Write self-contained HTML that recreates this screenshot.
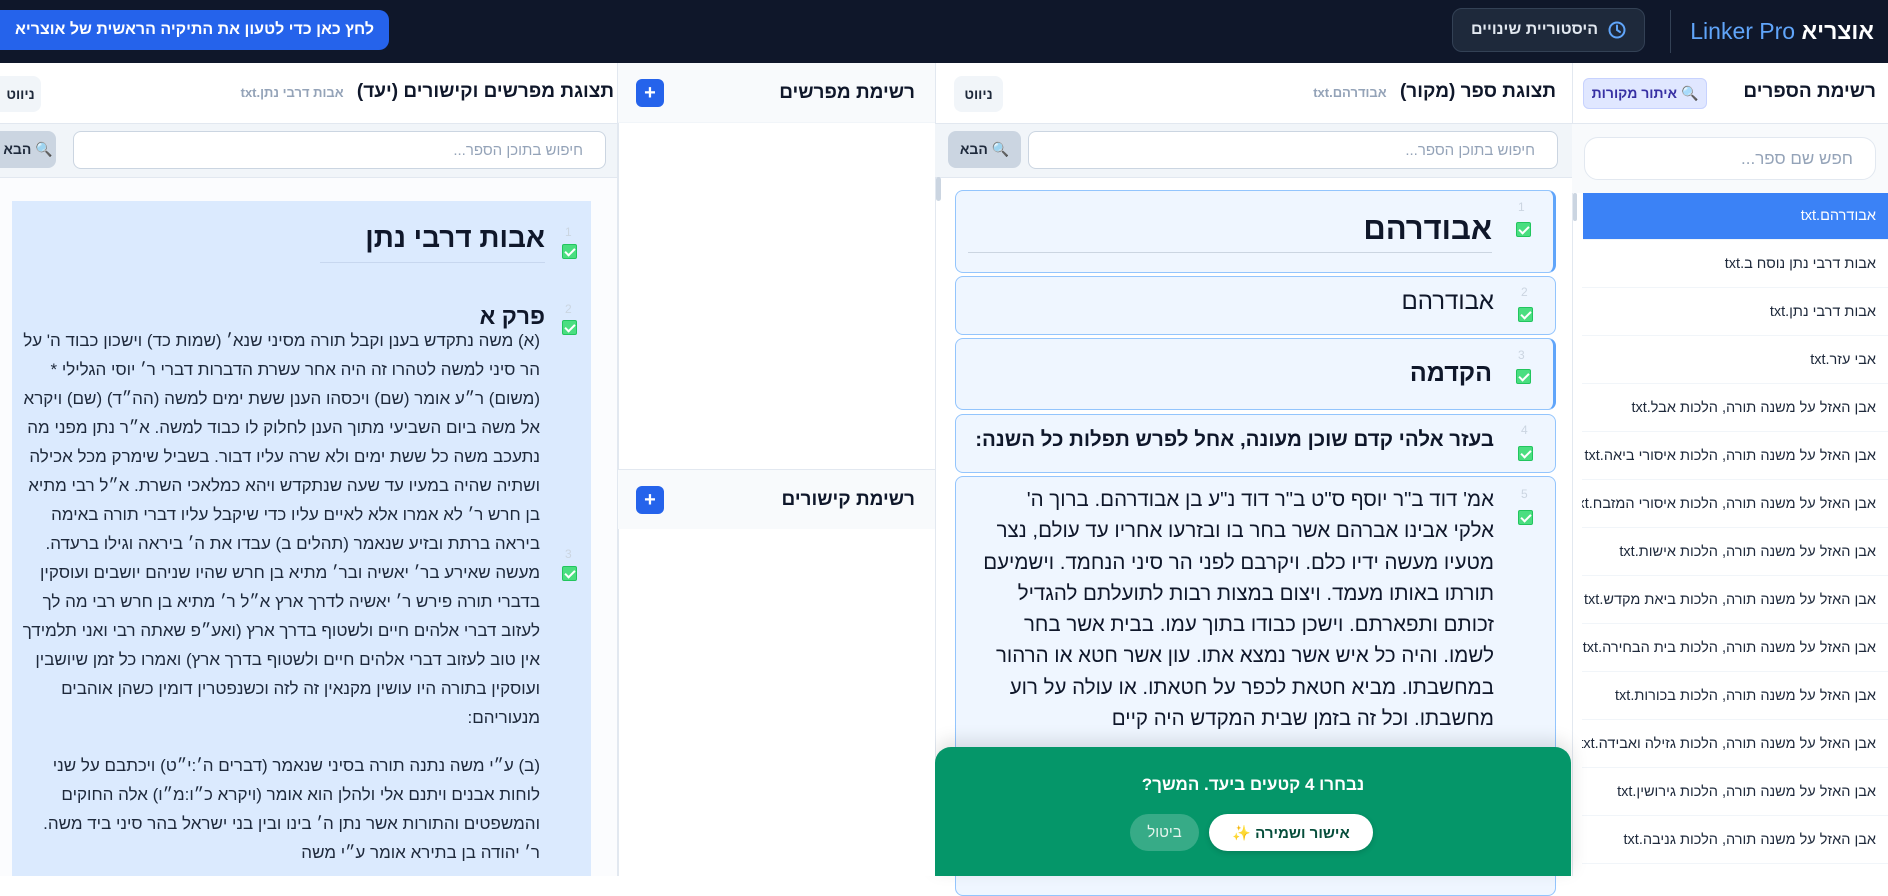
<!DOCTYPE html>
<html lang="he"><head><meta charset="utf-8">
<style>
*{box-sizing:border-box;margin:0;padding:0}
body{width:1888px;height:876px;overflow:hidden;background:#fff;font-family:"Liberation Sans","DejaVu Sans",sans-serif;position:relative;color:#0f172a}
.a{position:absolute}
.r{direction:rtl;white-space:nowrap}
.hdr{left:0;top:0;width:1888px;height:63px;background:#0f172a}
.title{font-weight:bold;font-size:19px;color:#0f172a}
.sub{font-weight:bold;font-size:13px;color:#94a3b8}
.nav{background:#f1f5f9;border-radius:8px;font-size:14px;font-weight:bold;color:#1e293b;display:flex;align-items:center;justify-content:center}
.inp{background:#fff;border:1px solid #cbd5e1;border-radius:8px;font-size:15px;color:#94a3b8;direction:rtl;padding-right:22px;display:flex;align-items:center}
.next{background:#cbd5e1;border-radius:8px;font-size:14px;font-weight:bold;color:#1e293b;display:flex;align-items:center;justify-content:center;gap:4px;direction:rtl}
.chk{width:15px;height:15px;background:#4ade80;border:1px solid #22c55e;border-radius:2px}
.chk:after{content:"";position:absolute;left:4px;top:1px;width:4px;height:8px;border:solid #fff;border-width:0 2px 2px 0;transform:rotate(45deg)}
.num{font-size:12px;color:#cbd5e1}
.card{background:#eff6ff;border:1px solid #93c5fd;border-radius:8px}
.book{right:0;width:306px;height:48px;border-bottom:1px solid #f1f5f9;font-size:14.5px;color:#1e293b;direction:rtl;padding-right:12px;display:flex;align-items:center;white-space:nowrap;overflow:hidden}
.plus{width:28px;height:28px;background:#2563eb;border-radius:6px;color:#fff;font-weight:bold;font-size:20px;display:flex;align-items:center;justify-content:center}
.tl{font-size:17px;color:#1e293b;line-height:29px;height:29px;text-align:right}
.sl{font-size:20.5px;color:#0f172a;line-height:31.3px;height:31.3px;text-align:right}
</style></head><body>

<!-- header -->
<div class="a hdr"></div>
<div class="a r" style="right:14px;top:16px;font-size:23px;line-height:30px"><b style="color:#fff">אוצריא</b> <span style="color:#60a5fa;font-weight:300">Linker Pro</span></div>
<div class="a" style="left:1670px;top:10px;width:1px;height:43px;background:#334155"></div>
<div class="a r" style="left:1452px;top:8px;width:193px;height:44px;background:#1e293b;border:1px solid #334155;border-radius:10px;display:flex;align-items:center;justify-content:center;gap:10px;font-weight:bold;font-size:16px;color:#e2e8f0">
<svg width="18" height="18" viewBox="0 0 18 18"><circle cx="9" cy="9" r="7.5" fill="none" stroke="#60a5fa" stroke-width="2"/><path d="M9 4.5V9l3 2" fill="none" stroke="#60a5fa" stroke-width="2" stroke-linecap="round"/></svg>היסטוריית שינויים</div>
<div class="a r" style="left:0;top:10px;width:389px;height:40px;background:#2563eb;border-radius:0 10px 10px 0;color:#fff;font-weight:bold;font-size:16px;display:flex;align-items:center;justify-content:center">לחץ כאן כדי לטעון את התיקיה הראשית של אוצריא</div>

<!-- books panel -->
<div class="a" style="left:1572px;top:63px;width:316px;height:813px;background:#fff;border-left:1px solid #e2e8f0"></div>
<div class="a r title" style="right:12px;top:81px">רשימת הספרים</div>
<div class="a r" style="left:1583px;top:78px;width:124px;height:31px;background:#e0e7ff;border:1px solid #c7d2fe;border-radius:6px;font-size:14px;font-weight:bold;color:#3730a3;display:flex;align-items:center;justify-content:center;gap:5px">🔍 איתור מקורות</div>
<div class="a" style="left:1572px;top:123px;width:316px;height:70px;background:#f8fafc;border-top:1px solid #e2e8f0"></div>
<div class="a inp" style="left:1584px;top:137px;width:292px;height:43px;border-radius:14px;border-color:#e2e8f0;font-size:17px">חפש שם ספר...</div>
<div class="a" style="left:1573px;top:193px;width:4px;height:28px;background:#cbd5e1;border-radius:2px"></div>
<div class="a book" style="top:193px;height:47px;background:#3b82f6;color:#fff;width:305px">אבודרהם.txt</div>
<div class="a book" style="top:240px">אבות דרבי נתן נוסח ב.txt</div>
<div class="a book" style="top:288px">אבות דרבי נתן.txt</div>
<div class="a book" style="top:336px">אבי עזר.txt</div>
<div class="a book" style="top:384px">אבן האזל על משנה תורה, הלכות אבל.txt</div>
<div class="a book" style="top:432px">אבן האזל על משנה תורה, הלכות איסורי ביאה.txt</div>
<div class="a book" style="top:480px">אבן האזל על משנה תורה, הלכות איסורי המזבח.txt</div>
<div class="a book" style="top:528px">אבן האזל על משנה תורה, הלכות אישות.txt</div>
<div class="a book" style="top:576px">אבן האזל על משנה תורה, הלכות ביאת מקדש.txt</div>
<div class="a book" style="top:624px">אבן האזל על משנה תורה, הלכות בית הבחירה.txt</div>
<div class="a book" style="top:672px">אבן האזל על משנה תורה, הלכות בכורות.txt</div>
<div class="a book" style="top:720px">אבן האזל על משנה תורה, הלכות גזילה ואבידה.txt</div>
<div class="a book" style="top:768px">אבן האזל על משנה תורה, הלכות גירושין.txt</div>
<div class="a book" style="top:816px">אבן האזל על משנה תורה, הלכות גניבה.txt</div>

<!-- source panel -->
<div class="a" style="left:935px;top:63px;width:637px;height:813px;background:#fff;border-left:1px solid #e2e8f0"></div>
<div class="a r" style="right:332px;top:81px"><span class="title">תצוגת ספר (מקור)</span> &nbsp; <span class="sub">אבודרהם.txt</span></div>
<div class="a nav" style="left:954px;top:76px;width:49px;height:36px">ניווט</div>
<div class="a" style="left:935px;top:123px;width:637px;height:55px;background:#f1f5f9;border-top:1px solid #e2e8f0;border-bottom:1px solid #e2e8f0"></div>
<div class="a inp" style="left:1028px;top:131px;width:530px;height:38px">חיפוש בתוכן הספר...</div>
<div class="a next" style="left:948px;top:131px;width:73px;height:37px">🔍 הבא</div>
<div class="a" style="left:936px;top:177px;width:5px;height:24px;background:#cbd5e1;border-radius:3px"></div>

<div class="a card" style="left:955px;top:190px;width:601px;height:83px;border-right:3px solid #60a5fa"></div>
<div class="a num" style="left:1518px;top:200px">1</div><div class="a chk" style="left:1516px;top:222px"></div>
<div class="a r" style="right:396px;top:211px;font-size:31px;font-weight:bold">אבודרהם</div>
<div class="a" style="left:968px;top:252px;width:524px;height:1px;background:#cbd5e1"></div>

<div class="a card" style="left:955px;top:276px;width:601px;height:59px"></div>
<div class="a num" style="left:1521px;top:285px">2</div><div class="a chk" style="left:1518px;top:307px"></div>
<div class="a r" style="right:394px;top:288px;font-size:24px">אבודרהם</div>

<div class="a card" style="left:955px;top:338px;width:601px;height:72px;border-right:3px solid #60a5fa"></div>
<div class="a num" style="left:1518px;top:348px">3</div><div class="a chk" style="left:1516px;top:369px"></div>
<div class="a r" style="right:396px;top:359px;font-size:25px;font-weight:bold">הקדמה</div>

<div class="a card" style="left:955px;top:414px;width:601px;height:59px"></div>
<div class="a num" style="left:1521px;top:423px">4</div><div class="a chk" style="left:1518px;top:446px"></div>
<div class="a r" style="right:394px;top:428px;font-size:20.5px;font-weight:bold">בעזר אלהי קדם שוכן מעונה, אחל לפרש תפלות כל השנה:</div>

<div class="a card" style="left:955px;top:476px;width:601px;height:420px"></div>
<div class="a num" style="left:1521px;top:487px">5</div><div class="a chk" style="left:1518px;top:510px"></div>
<div class="a r" style="right:394px;top:484px;width:540px">
<div class="sl">אמ' דוד ב"ר יוסף ס"ט ב"ר דוד נ"ע בן אבודרהם. ברוך ה'</div>
<div class="sl">אלקי אבינו אברהם אשר בחר בו ובזרעו אחריו עד עולם, נצר</div>
<div class="sl">מטעיו מעשה ידיו כלם. ויקרבם לפני הר סיני הנחמד. וישמיעם</div>
<div class="sl">תורתו באותו מעמד. ויצום במצות רבות לתועלתם להגדיל</div>
<div class="sl">זכותם ותפארתם. וישכן כבודו בתוך עמו. בבית אשר בחר</div>
<div class="sl">לשמו. והיה כל איש אשר נמצא אתו. עון אשר חטא או הרהור</div>
<div class="sl">במחשבתו. מביא חטאת לכפר על חטאתו. או עולה על רוע</div>
<div class="sl">מחשבתו. וכל זה בזמן שבית המקדש היה קיים</div>
</div>

<!-- toast -->
<div class="a" style="left:935px;top:747px;width:636px;height:129px;background:#059669;border-radius:16px 16px 0 0;box-shadow:0 -6px 18px rgba(0,0,0,.12)"></div>
<div class="a r" style="left:935px;width:636px;top:775px;text-align:center;font-size:17px;font-weight:bold;color:#fff">נבחרו 4 קטעים ביעד. המשך?</div>
<div class="a r" style="left:1209px;top:814px;width:164px;height:37px;background:#fff;border-radius:19px;display:flex;align-items:center;justify-content:center;gap:6px;font-size:15px;font-weight:bold;color:#064e3b;box-shadow:0 2px 6px rgba(0,0,0,.15)">אישור ושמירה ✨</div>
<div class="a r" style="left:1130px;top:814px;width:69px;height:37px;background:rgba(255,255,255,.2);border-radius:19px;display:flex;align-items:center;justify-content:center;font-size:15px;color:#e6f5ee">ביטול</div>

<!-- commentators panel -->
<div class="a" style="left:618px;top:63px;width:317px;height:813px;background:#fff;border-left:1px solid #e2e8f0"></div>
<div class="a" style="left:618px;top:63px;width:317px;height:60px;background:#f8fafc;border-bottom:1px solid #f1f5f9"></div>
<div class="a r title" style="right:973px;top:82px">רשימת מפרשים</div>
<div class="a plus" style="left:636px;top:79px">+</div>
<div class="a" style="left:618px;top:469px;width:317px;height:60px;background:#f8fafc;border-top:1px solid #e2e8f0"></div>
<div class="a r title" style="right:973px;top:489px">רשימת קישורים</div>
<div class="a plus" style="left:636px;top:486px">+</div>

<!-- target panel -->
<div class="a" style="left:0;top:63px;width:618px;height:813px;background:#fbfcfe"></div>
<div class="a" style="left:0;top:63px;width:618px;height:60px;background:#fff"></div>
<div class="a r" style="right:1274px;top:81px"><span class="title">תצוגת מפרשים וקישורים (יעד)</span> &nbsp; <span class="sub">אבות דרבי נתן.txt</span></div>
<div class="a nav" style="left:0;top:76px;width:41px;height:36px;border-radius:0 8px 8px 0">ניווט</div>
<div class="a" style="left:0;top:123px;width:618px;height:55px;background:#f1f5f9;border-top:1px solid #e2e8f0;border-bottom:1px solid #e2e8f0"></div>
<div class="a inp" style="left:73px;top:131px;width:533px;height:38px">חיפוש בתוכן הספר...</div>
<div class="a next" style="left:0;top:131px;width:56px;height:37px;border-radius:0 8px 8px 0">🔍 הבא</div>

<div class="a" style="left:12px;top:201px;width:579px;height:675px;background:#dbeafe"></div>
<div class="a num" style="left:565px;top:225px">1</div><div class="a chk" style="left:562px;top:244px"></div>
<div class="a r" style="right:1343px;top:222px;font-size:28px;font-weight:bold">אבות דרבי נתן</div>
<div class="a" style="left:320px;top:262px;width:225px;height:1px;background:#c7d7ef"></div>
<div class="a num" style="left:565px;top:302px">2</div><div class="a chk" style="left:562px;top:320px"></div>
<div class="a r" style="right:1343px;top:303px;font-size:23px;font-weight:bold">פרק א</div>
<div class="a num" style="left:565px;top:547px">3</div><div class="a chk" style="left:562px;top:566px"></div>
<div class="a r" style="right:1348px;top:326px;width:530px">
<div class="tl">(א) משה נתקדש בענן וקבל תורה מסיני שנא׳ (שמות כד) וישכון כבוד ה' על</div>
<div class="tl">הר סיני למשה לטהרו זה היה אחר עשרת הדברות דברי ר׳ יוסי הגלילי *</div>
<div class="tl">(משום) ר״ע אומר (שם) ויכסהו הענן ששת ימים למשה (הה״ד) (שם) ויקרא</div>
<div class="tl">אל משה ביום השביעי מתוך הענן לחלוק לו כבוד למשה. א״ר נתן מפני מה</div>
<div class="tl">נתעכב משה כל ששת ימים ולא שרה עליו דבור. בשביל שימרק מכל אכילה</div>
<div class="tl">ושתיה שהיה במעיו עד שעה שנתקדש ויהא כמלאכי השרת. א״ל רבי מתיא</div>
<div class="tl">בן חרש ר׳ לא אמרו אלא לאיים עליו כדי שיקבל עליו דברי תורה באימה</div>
<div class="tl">ביראה ברתת ובזיע שנאמר (תהלים ב) עבדו את ה׳ ביראה וגילו ברעדה.</div>
<div class="tl">מעשה שאירע בר׳ יאשיה ובר׳ מתיא בן חרש שהיו שניהם יושבים ועוסקין</div>
<div class="tl">בדברי תורה פירש ר׳ יאשיה לדרך ארץ א״ל ר׳ מתיא בן חרש רבי מה לך</div>
<div class="tl">לעזוב דברי אלהים חיים ולשטוף בדרך ארץ (ואע״פ שאתה רבי ואני תלמידך</div>
<div class="tl">אין טוב לעזוב דברי אלהים חיים ולשטוף בדרך ארץ) ואמרו כל זמן שיושבין</div>
<div class="tl">ועוסקין בתורה היו עושין מקנאין זה לזה וכשנפטרין דומין כשהן אוהבים</div>
<div class="tl">מנעוריהם:</div>
<div style="height:19px"></div>
<div class="tl">(ב) ע״י משה נתנה תורה בסיני שנאמר (דברים ה׳:י״ט) ויכתבם על שני</div>
<div class="tl">לוחות אבנים ויתנם אלי ולהלן הוא אומר (ויקרא כ״ו:מ״ו) אלה החוקים</div>
<div class="tl">והמשפטים והתורות אשר נתן ה׳ בינו ובין בני ישראל בהר סיני ביד משה.</div>
<div class="tl">ר׳ יהודה בן בתירא אומר ע״י משה</div>
</div>
<div class="a" style="left:617px;top:63px;width:1px;height:813px;background:#e2e8f0"></div>
</body></html>
